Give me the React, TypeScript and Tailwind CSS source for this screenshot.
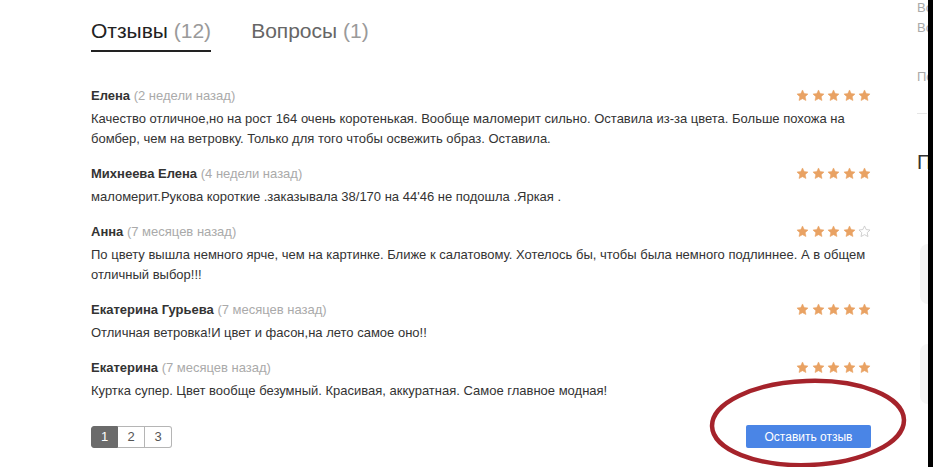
import React from "react";

type Review = { name: string; date: string; text: string; rating: number };

const reviews: Review[] = [
  {
    name: "Елена",
    date: "(2 недели назад)",
    text: "Качество отличное,но на рост 164 очень коротенькая. Вообще маломерит сильно. Оставила из-за цвета. Больше похожа на бомбер, чем на ветровку. Только для того чтобы освежить образ. Оставила.",
    rating: 5,
  },
  {
    name: "Михнеева Елена",
    date: "(4 недели назад)",
    text: "маломерит.Рукова короткие .заказывала 38/170 на 44'46 не подошла .Яркая .",
    rating: 5,
  },
  {
    name: "Анна",
    date: "(7 месяцев назад)",
    text: "По цвету вышла немного ярче, чем на картинке. Ближе к салатовому. Хотелось бы, чтобы была немного подлиннее. А в общем отличный выбор!!!",
    rating: 4,
  },
  {
    name: "Екатерина Гурьева",
    date: "(7 месяцев назад)",
    text: "Отличная ветровка!И цвет и фасон,на лето самое оно!!",
    rating: 5,
  },
  {
    name: "Екатерина",
    date: "(7 месяцев назад)",
    text: "Куртка супер. Цвет вообще безумный. Красивая, аккуратная. Самое главное модная!",
    rating: 5,
  },
];

function Star({ filled }: { filled: boolean }) {
  return (
    <svg width="13" height="13" viewBox="0 0 24 24" className="block">
      <path
        d="M12 1.8l3.1 6.6 7.1.9-5.2 4.9 1.4 7.1L12 17.8l-6.4 3.5 1.4-7.1-5.2-4.9 7.1-.9z"
        fill={filled ? "#e9a263" : "none"}
        stroke={filled ? "#e9a263" : "#c8c8c8"}
        strokeWidth={filled ? 1 : 1.6}
        strokeLinejoin="round"
      />
    </svg>
  );
}

function Stars({ rating }: { rating: number }) {
  return (
    <div className="flex gap-[2.5px] pt-[3px]">
      {[0, 1, 2, 3, 4].map((i) => (
        <Star key={i} filled={i < rating} />
      ))}
    </div>
  );
}

export default function App() {
  return (
    <div
      className="relative flex h-[467px] w-[933px] bg-black text-[#333]"
      style={{ fontFamily: '"Liberation Sans", Arial, sans-serif' }}
    >
      <div className="flex h-[467px] w-[928px] shrink-0 bg-white">
        <div className="w-[917px] shrink-0 pl-[91px]">
          <div className="w-[780px]">
            {/* Tabs */}
            <div className="flex gap-[40px] pt-[19px] text-[21px] leading-[24px]">
              <div className="border-b-2 border-[#222] pb-[7px] text-[#222]">
                Отзывы <span className="text-[#9a9a9a]">(12)</span>
              </div>
              <div className="pb-[7px] text-[#666]">
                Вопросы <span className="text-[#9a9a9a]">(1)</span>
              </div>
            </div>

            {/* Reviews */}
            <div className="mt-[34px] text-[13px]">
              {reviews.map((r, i) => (
                <div key={i} className="pb-[15px]">
                  <div className="flex h-[20px] justify-between leading-[20px]">
                    <div>
                      <span className="font-bold text-[#333]">{r.name}</span>{" "}
                      <span className="text-[#aaa]">{r.date}</span>
                    </div>
                    <Stars rating={r.rating} />
                  </div>
                  <p className="mt-[3px] leading-[20px] text-[#333]">{r.text}</p>
                </div>
              ))}
            </div>

            {/* Footer */}
            <div className="mt-[9px] flex items-center justify-between">
              <div className="flex h-[22px] text-[13px] leading-[20px]">
                <div className="w-[27px] rounded-l-[3px] border border-[#6b6b6b] bg-[#6b6b6b] text-center text-white">
                  1
                </div>
                <div className="w-[27px] border-y border-r border-[#b5b5b5] text-center text-[#555]">
                  2
                </div>
                <div className="w-[27px] rounded-r-[3px] border-y border-r border-[#b5b5b5] text-center text-[#555]">
                  3
                </div>
              </div>
              <button className="h-[23px] w-[125px] rounded-[2px] bg-[#4a85e6] text-[12px] text-white">
                Оставить отзыв
              </button>
            </div>
          </div>
        </div>

        {/* Right sidebar fragment, clipped by the window edge */}
        <div className="h-[467px] w-[11px] shrink-0 overflow-hidden text-[13px] whitespace-nowrap text-[#aaa]">
          <div className="mt-[-2px] leading-[20px]">Во</div>
          <div className="leading-[20px]">Во</div>
          <div className="mt-[29px] leading-[20px]">По</div>
          <div className="mt-[26px] h-px w-[10px] bg-[#e6e6e6]" />
          <div className="mt-[36px] text-[20px] leading-[24px] text-[#333]">П</div>
          <div className="mt-[70px] ml-[3px] h-[60px] w-[8px] rounded-l-full bg-[#f5f5f5]" />
          <div className="mt-[40px] ml-[3px] h-[60px] w-[8px] rounded-l-full bg-[#f6f6f6]" />
        </div>
      </div>

      {/* Dark edge of the neighbouring window, lying over the page */}
      <div className="absolute right-0 top-0 h-[467px] w-[5px] bg-black" />

      {/* Red hand-drawn ellipse annotation */}
      <svg
        className="pointer-events-none absolute left-[705px] top-[377px]"
        width="210"
        height="90"
        viewBox="0 0 210 90"
      >
        <ellipse
          cx="103"
          cy="46"
          rx="96"
          ry="42"
          fill="none"
          stroke="#a5232b"
          strokeWidth="4.5"
          transform="rotate(-2 103 46)"
        />
      </svg>
    </div>
  );
}
